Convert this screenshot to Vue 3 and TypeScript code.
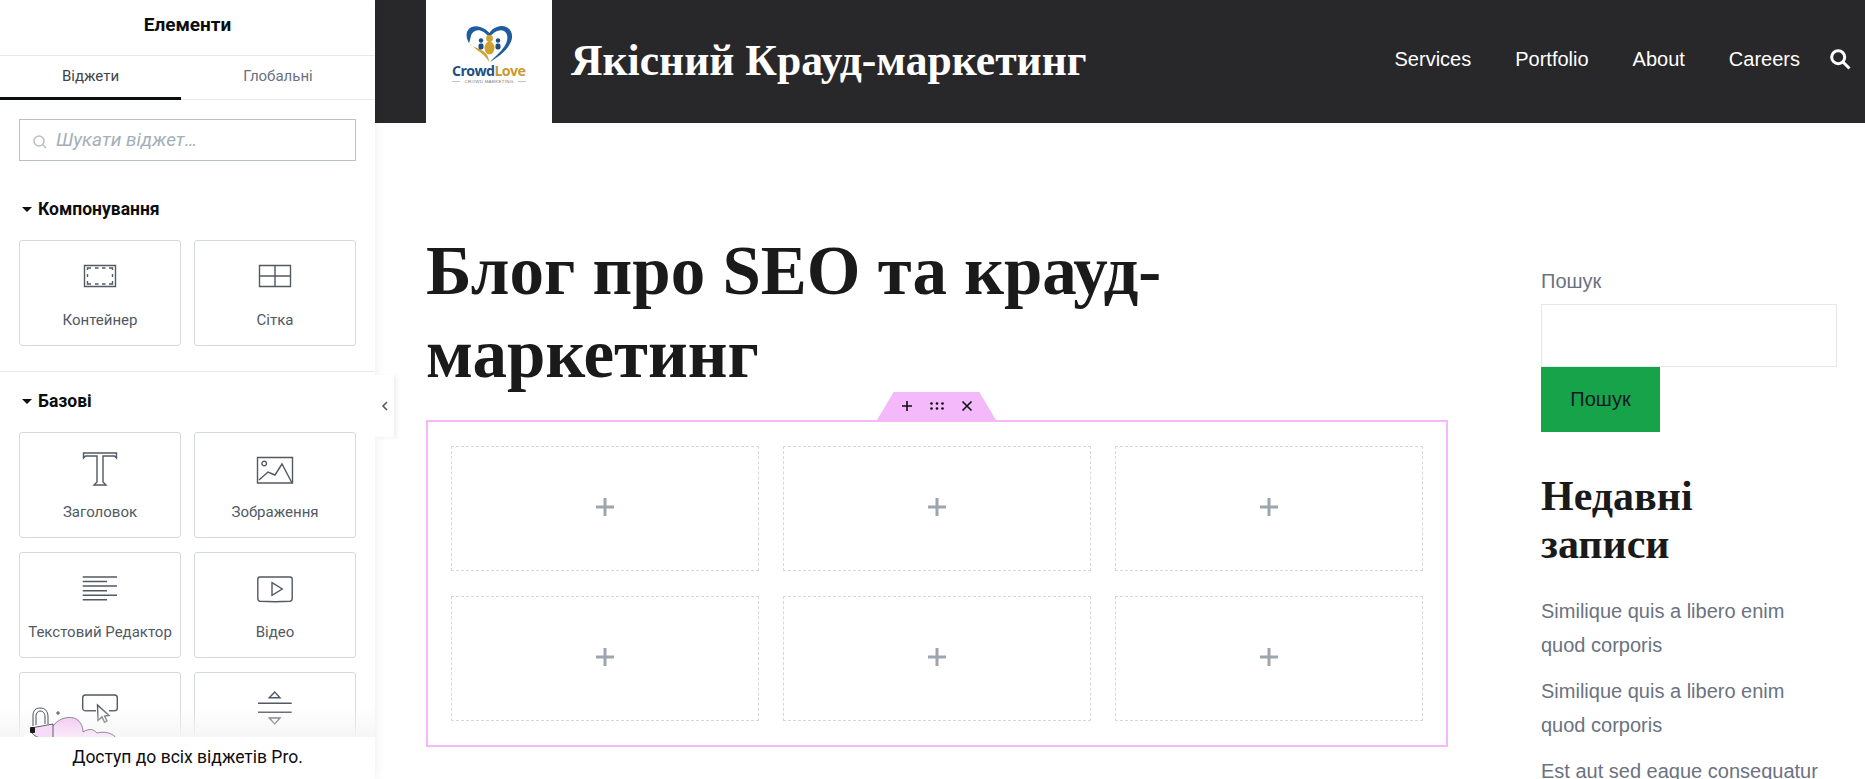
<script setup lang="ts">
interface Widget {
  label?: string
  paths: string[]
}

const layoutWidgets: Widget[] = [
  {
    label: 'Контейнер',
    paths: ['M4.5 9.5h31v21h-31z', 'M7.5 14v-2h3.5M15 12h3.5M22 12h3.5M29 12h3.5v2M32.5 18v3M32.5 25v3h-3.5M25.5 28H22M18.5 28H15M11 28H7.5v-3M7.5 21v-3']
  },
  { label: 'Сітка', paths: ['M4.5 9.5h31v21h-31z', 'M4.5 20h31M20 9.5v21'] }
]

const basicWidgets: Widget[] = [
  { label: 'Заголовок', paths: ['M3.5 5H36.5V10L34.5 8H23V34L26 37H14L17 34V8H5.5L3.5 10Z'] },
  {
    label: 'Зображення',
    paths: ['M2.5 9.5h35V35h-35z', 'M4 32L13 24L20 27L27 16L37 35', 'M11.5 15.5a2.3 2.3 0 1 1-4.6 0a2.3 2.3 0 1 1 4.6 0z']
  },
  {
    label: 'Текстовий Редактор',
    paths: ['M2.7 9H37M2.7 13.5H27M2.7 18H37M2.7 22.7H27M2.7 27.3H37M2.7 31.7H27']
  },
  {
    label: 'Відео',
    paths: [
      'M5 9h30c1.5 0 2.2 1 2.2 2.5v19c0 1.5-.7 2.5-2.2 2.8c-10 .6-20 .6-30 0c-1.5-.3-2.2-1.3-2.2-2.8v-19C2.8 10 3.5 9 5 9z',
      'M17 14.7L27.3 21L17 27.3Z'
    ]
  },
  {
    paths: [
      'M16 22.7H5.5c-1.8 0-2.8-1-2.8-2.5V10c0-1.8 1-3 2.8-3h29c1.8 0 2.8 1.2 2.8 3v10.2c0 1.5-1 2.5-2.8 2.5H29',
      'M17.5 17L29 27.5L24.6 28L27 33L24.5 34.2L22 29L18 32.5Z'
    ]
  },
  { paths: ['M14.3 9.7L19.7 4L25 9.7Z', 'M3 15.3H36.7M3 24.3H36.7', 'M14.3 30H25L19.7 36Z'] }
]

const blocks = [1, 2, 3, 4, 5, 6]
const navLinks = ['Services', 'Portfolio', 'About', 'Careers']
const recentPosts = [
  'Similique quis a libero enim quod corporis',
  'Similique quis a libero enim quod corporis',
  'Est aut sed eaque consequatur'
]
</script>

<template>
  <div class="page">
    <aside class="panel">
      <h2 class="panel_title">Елементи</h2>
      <div class="tabs">
        <span class="tab active">Віджети</span>
        <span class="tab">Глобальні</span>
      </div>
      <div class="search">
        <svg class="search_icon" viewBox="0 0 16 16" width="16" height="16">
          <circle cx="7" cy="7" r="5" />
          <path d="M10.8 10.8L14 14" />
        </svg>
        <span class="search_text">Шукати віджет…</span>
      </div>

      <section class="group first">
        <h3 class="group_title"><i class="caret"></i>Компонування</h3>
        <div class="cards">
          <div v-for="w in layoutWidgets" :key="w.label" class="card">
            <svg viewBox="0 0 40 40" width="40" height="40" class="card_icon">
              <path v-for="d in w.paths" :key="d" :d="d" />
            </svg>
            <span class="card_label">{{ w.label }}</span>
          </div>
        </div>
      </section>

      <section class="group">
        <h3 class="group_title"><i class="caret"></i>Базові</h3>
        <div class="cards">
          <div v-for="w in basicWidgets" :key="w.paths[0]" class="card">
            <svg viewBox="0 0 40 40" width="40" height="40" class="card_icon">
              <path v-for="d in w.paths" :key="d" :d="d" />
            </svg>
            <span v-if="w.label" class="card_label">{{ w.label }}</span>
          </div>
        </div>
      </section>

      <div class="promo">Доступ до всіх віджетів Pro.</div>
      <svg class="promo_art" viewBox="0 0 100 35" width="100" height="35">
        <defs>
          <linearGradient id="cloud" x1="0" y1="0" x2="0" y2="1">
            <stop offset="0" stop-color="#f3cdf3" />
            <stop offset="1" stop-color="#fbeefb" />
          </linearGradient>
        </defs>
        <path
          class="cloud"
          d="M33 24C38 17 47 14 54 16C60 18 63 24 63 30C70 26 73 27 77 31C85 29 93 31 97 37H20V35Z"
        />
        <circle cx="12" cy="40" r="10" fill="#fff" />
        <path class="lock_line" d="M13 24V14C13 8 16 6 20 6C25 6 28 9 28 15V22M16 23V14C16 11 18 9 20 9C23 9 25 11 25 15V22" />
        <path class="lock_body" d="M11 26L33 22V36L24 37C18 36 14 34 11 30Z" />
        <rect x="10" y="25" width="5" height="6" rx="1" fill="#1b1b1b" />
        <path class="lock_line" d="M36 11H40M38 9V13" />
      </svg>

      <div class="handle">
        <svg viewBox="0 0 10 12" width="10" height="12"><path d="M7 2L3 6L7 10" /></svg>
      </div>
    </aside>

    <div class="site">
      <header class="site_header">
        <div class="logo">
          <svg viewBox="0 0 126 123" width="126" height="123">
            <path
              fill="#1d5c9e"
              d="M63.5 33C58 27 51 25 46 27C40 29 39 37 43 43C45 39 44 33 49 31C54 29 58 32 63.5 37C68 32 73 29 78 31C83 34 82 41 78 47C74 53 68 57 64 62C72 57 84 49 86 38C87 28 78 24 71 27C68 28 65 30 63.5 33Z"
            />
            <path fill="#d0a230" d="M42 41C45 48 58 52 63 62C63 52 54 49 48 47C45 46 43 44 42 41Z" />
            <circle cx="63.5" cy="38.5" r="3.4" fill="#d0a230" />
            <ellipse cx="63.5" cy="48" rx="5" ry="6.5" fill="#d0a230" />
            <circle cx="55" cy="40.5" r="2.2" fill="#1d4f86" />
            <circle cx="72" cy="40.5" r="2.2" fill="#1d4f86" />
            <rect x="52.5" y="43.5" width="5" height="6" rx="2" fill="#1d4f86" />
            <rect x="69.5" y="43.5" width="5" height="6" rx="2" fill="#1d4f86" />
            <text x="26" y="76" class="logo_name">Crowd<tspan fill="#c9992b">Love</tspan></text>
            <text x="63" y="83" class="logo_sub" text-anchor="middle">CROWD MARKETING</text>
            <path d="M26 81.5h8M92 81.5h8" stroke="#999" stroke-width=".6" />
          </svg>
        </div>
        <div class="site_title">Якісний Крауд-маркетинг</div>
        <nav class="nav">
          <a v-for="link in navLinks" :key="link">{{ link }}</a>
          <svg class="nav_search" viewBox="0 0 21 21" width="21" height="21">
            <circle cx="8.2" cy="8.2" r="6.5" />
            <path d="M13 13L19.5 19.5" />
          </svg>
        </nav>
      </header>

      <div class="content">
        <main class="main">
          <h1 class="page_title">Блог про SEO та крауд-маркетинг</h1>
          <div class="section">
            <div class="section_handle">
              <svg viewBox="0 0 12 12" width="12" height="12"><path d="M6 1V11M1 6H11" /></svg>
              <svg viewBox="0 0 16 12" width="16" height="12" class="dots">
                <circle cx="2.5" cy="3.5" r="1.3" /><circle cx="8" cy="3.5" r="1.3" /><circle cx="13.5" cy="3.5" r="1.3" />
                <circle cx="2.5" cy="8.5" r="1.3" /><circle cx="8" cy="8.5" r="1.3" /><circle cx="13.5" cy="8.5" r="1.3" />
              </svg>
              <svg viewBox="0 0 12 12" width="12" height="12"><path d="M1.5 1.5L10.5 10.5M10.5 1.5L1.5 10.5" /></svg>
            </div>
            <div v-for="b in blocks" :key="b" class="block">
              <svg viewBox="0 0 18 18" width="18" height="18"><path d="M9 0V18M0 9H18" /></svg>
            </div>
          </div>
        </main>

        <aside class="side">
          <label class="side_label">Пошук</label>
          <div class="side_input"></div>
          <button class="side_button">Пошук</button>
          <h2 class="side_title">Недавні записи</h2>
          <p v-for="(post, i) in recentPosts" :key="i" class="post">{{ post }}</p>
        </aside>
      </div>
    </div>
  </div>
</template>

<style scoped>
.page {
  display: flex;
  height: 100vh;
  overflow: hidden;
  background: #fff;
}
.panel {
  position: relative;
  flex: 0 0 375px;
  width: 375px;
  height: 779px;
  box-sizing: border-box;
  font-family: Roboto, sans-serif;
  background: #fff;
  box-shadow: 0 0 12px rgba(0, 0, 0, 0.08);
  z-index: 2;
}
.panel_title {
  margin: 0;
  height: 55px;
  line-height: 50px;
  text-align: center;
  font-size: 19px;
  font-weight: 700;
  color: #0c0d0e;
  border-bottom: 1px solid #e6e8ea;
  box-sizing: content-box;
}
.tabs {
  display: grid;
  grid-template-columns: 181px 194px;
  height: 44px;
  border-bottom: 1px solid #e6e8ea;
  box-sizing: border-box;
}
.tab {
  text-align: center;
  line-height: 41px;
  font-size: 15px;
  color: #69727d;
}
.tab.active {
  color: #3f444b;
  border-bottom: 3px solid #0c0d0e;
  box-sizing: border-box;
}
.search {
  display: flex;
  align-items: center;
  height: 42px;
  margin: 19px 19px 0;
  padding-left: 12px;
  border: 1px solid #babfc5;
  box-sizing: border-box;
}
.search_icon {
  margin-top: 3px;
  fill: none;
  stroke: #babfc5;
  stroke-width: 1.5;
}
.search_text {
  margin: -2px 0 0 8px;
  font-size: 19px;
  font-style: italic;
  color: #a4afb7;
}
.group {
  padding: 0 19px;
}
.group.first {
  height: 211px;
  border-bottom: 1px solid #e6e8ea;
  box-sizing: border-box;
  padding-top: 37px;
}
.group_title {
  display: flex;
  align-items: center;
  margin: 0;
  font-size: 17.5px;
  line-height: 22px;
  font-weight: 700;
  color: #0c0d0e;
}
.group:not(.first) {
  padding-top: 18px;
}
.caret {
  width: 0;
  height: 0;
  margin: 0 6px 0 3px;
  border-left: 5px solid transparent;
  border-right: 5px solid transparent;
  border-top: 5px solid #0c0d0e;
}
.cards {
  display: grid;
  grid-template-columns: 162px 162px;
  grid-auto-rows: 106px;
  gap: 14px 13px;
  margin-top: 20px;
}
.card {
  display: flex;
  flex-direction: column;
  align-items: center;
  border: 1px solid #d5d8dc;
  border-radius: 3px;
  box-sizing: border-box;
}
.card_icon {
  margin-top: 15px;
  fill: none;
  stroke: #515962;
  stroke-width: 1.4;
}
.card_label {
  margin-top: 14px;
  font-size: 15px;
  line-height: 20px;
  color: #515962;
  white-space: nowrap;
}
.promo_art {
  position: absolute;
  left: 20px;
  top: 702px;
}
.cloud {
  fill: url(#cloud);
  stroke: #4a4a55;
  stroke-width: 0.6;
}
.lock_line {
  fill: none;
  stroke: #3b3f45;
  stroke-width: 0.9;
}
.lock_body {
  fill: #f6dcf6;
  stroke: #3b3f45;
  stroke-width: 0.8;
}
.promo {
  position: absolute;
  left: 0;
  right: 0;
  bottom: 0;
  height: 42px;
  line-height: 40px;
  text-align: center;
  font-size: 17.5px;
  color: #0c0d0e;
  background: #fff;
}
.promo::before {
  content: '';
  position: absolute;
  left: 0;
  right: 0;
  top: -30px;
  height: 30px;
  background: linear-gradient(rgba(245, 245, 245, 0), rgba(245, 245, 245, 0.9));
}
.handle {
  position: absolute;
  left: 375px;
  top: 375px;
  display: flex;
  align-items: center;
  justify-content: center;
  width: 19px;
  height: 62px;
  background: #fff;
  box-shadow: 3px 1px 4px rgba(0, 0, 0, 0.06);
}
.handle svg {
  fill: none;
  stroke: #515962;
  stroke-width: 1.6;
}
.site {
  flex: 1;
  min-width: 0;
}
.site_header {
  display: flex;
  align-items: center;
  height: 123px;
  padding: 0 14px 0 51px;
  background: #28282a;
}
.logo {
  flex: 0 0 126px;
  height: 123px;
  background: #fff;
}
.logo_name {
  font-family: 'Open Sans', sans-serif;
  font-size: 14.2px;
  font-weight: 700;
  letter-spacing: -0.6px;
  fill: #1d4f86;
}
.logo_sub {
  font-family: 'Liberation Sans', sans-serif;
  font-size: 4.4px;
  letter-spacing: 0.3px;
  fill: #777;
}
.site_title {
  margin: -4px 0 0 19px;
  font-family: 'Liberation Serif', serif;
  font-size: 43.6px;
  font-weight: 700;
  color: #fff;
  white-space: nowrap;
}
.nav {
  display: flex;
  align-items: center;
  gap: 44px;
  margin: -5px 0 0 auto;
  font-family: 'Liberation Sans', sans-serif;
  font-size: 20px;
  color: #fff;
}
.nav_search {
  margin-left: -14px;
  fill: none;
  stroke: #fff;
  stroke-width: 3;
}
.content {
  display: flex;
  padding-left: 51px;
}
.main {
  flex: 0 0 1022px;
  width: 1022px;
}
.page_title {
  width: 800px;
  margin: 0;
  padding-top: 107px;
  font-family: 'Liberation Serif', serif;
  font-size: 69px;
  line-height: 83px;
  font-weight: 700;
  color: #1a1a1a;
}
.section {
  position: relative;
  display: grid;
  grid-template-columns: repeat(3, 1fr);
  grid-auto-rows: 125px;
  gap: 25px 24px;
  margin-top: 24px;
  padding: 24px 23px;
  border: 2px solid #f3b9fb;
  box-sizing: border-box;
  height: 327px;
}
.section_handle {
  position: absolute;
  left: 449px;
  top: -30px;
  display: flex;
  align-items: center;
  justify-content: center;
  gap: 16px;
  width: 119px;
  height: 28px;
  box-sizing: border-box;
  background: #f3b9fb;
  clip-path: polygon(14% 0, 86% 0, 100% 100%, 0 100%);
}
.section_handle svg {
  fill: none;
  stroke: #0c0d0e;
  stroke-width: 1.6;
}
.section_handle .dots {
  fill: #0c0d0e;
  stroke: none;
}
.block {
  display: flex;
  align-items: center;
  justify-content: center;
  padding-bottom: 3px;
  border: 1px dashed #d5d8dc;
}
.block svg {
  fill: none;
  stroke: #9da5ae;
  stroke-width: 3;
}
.side {
  flex: 0 0 296px;
  margin-left: 93px;
  padding-top: 135px;
  font-family: 'Liberation Sans', sans-serif;
  font-size: 20px;
  color: #6b7280;
}
.side_label {
  display: block;
  line-height: 46px;
}
.side_input {
  height: 63px;
  border: 1px solid #e5e7eb;
  box-sizing: border-box;
}
.side_button {
  display: block;
  width: 119px;
  height: 65px;
  padding: 0;
  border: none;
  background: #16a34a;
  color: #111827;
  font: inherit;
}
.side_title {
  margin: 40px 0 26px;
  width: 200px;
  font-family: 'Liberation Serif', serif;
  font-size: 42px;
  line-height: 48px;
  font-weight: 700;
  color: #1a1a1a;
}
.post {
  width: 285px;
  margin: 0 0 12px;
  line-height: 34px;
}
</style>

<style>
html,
body {
  margin: 0;
  overflow: hidden;
}
</style>
